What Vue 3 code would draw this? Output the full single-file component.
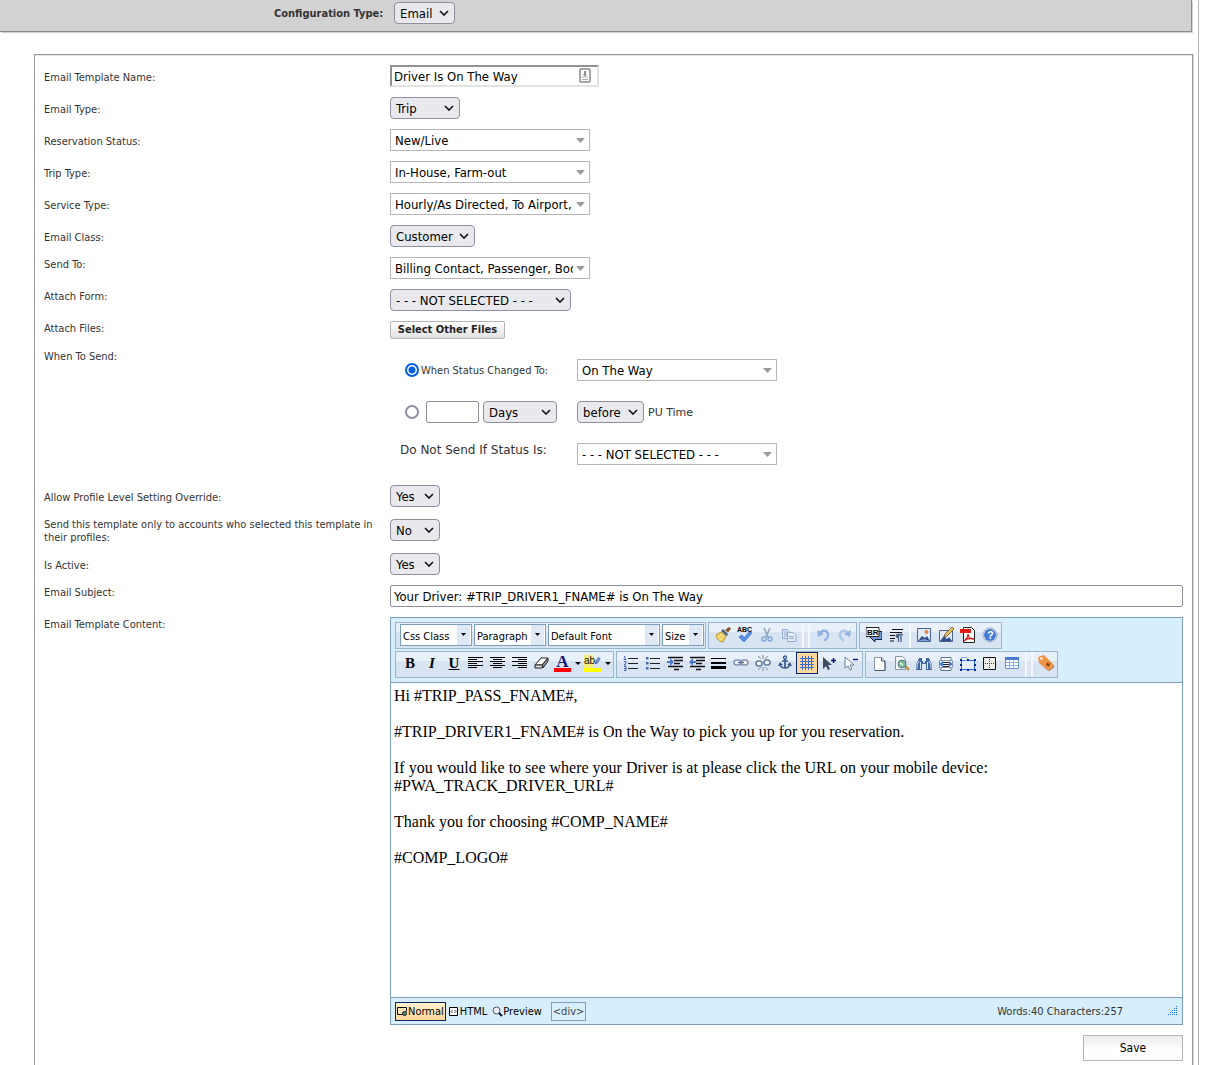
<script setup>
import { ref } from 'vue'

const configType = ref('Email')
const sendMode = ref('status')

const topRows = [
  { id: 'etype', label: 'Email Type:', value: 'Trip', kind: 'native', size: 'w70' },
  { id: 'resstatus', label: 'Reservation Status:', value: 'New/Live', kind: 'flat', size: 'w200' },
  { id: 'triptype', label: 'Trip Type:', value: 'In-House, Farm-out', kind: 'flat', size: 'w200' },
  { id: 'svctype', label: 'Service Type:', value: 'Hourly/As Directed, To Airport, From Airport', kind: 'flat', size: 'w200' },
  { id: 'eclass', label: 'Email Class:', value: 'Customer', kind: 'native', size: 'w85' },
  { id: 'sendto', label: 'Send To:', value: 'Billing Contact, Passenger, Booking Contact', kind: 'flat', size: 'w200', top: true },
  { id: 'form', label: 'Attach Form:', value: '- - - NOT SELECTED - - -', kind: 'native', size: 'w181', top: true },
]

const flagRows = [
  { id: 'override', label: 'Allow Profile Level Setting Override:', value: 'Yes' },
  { id: 'only', label: 'Send this template only to accounts who selected this template in their profiles:', value: 'No' },
  { id: 'active', label: 'Is Active:', value: 'Yes' },
]

const combos = [
  { label: 'Css Class', size: 'c72' },
  { label: 'Paragraph', size: 'c72' },
  { label: 'Default Font', size: 'c112' },
  { label: 'Size', size: 'c42' },
]

const art = {
  brush: '<path d="M1 8l5-3 5 4-3 6c-3 0-7-3-7-7z" fill="#f3cf63" stroke="#b08022" stroke-width=".8"/><path d="M3 9l4 4M5 7l4 4" stroke="#fff3b0"/><path d="M6 4l6 5 1-2-5-5z" fill="#4f5f78"/><path d="M10 3l4-3 2 1.500-3 4z" fill="#8a5526"/>',
  spell: '<text x="0" y="5" font-size="7" font-weight="bold" font-family="Liberation Sans, sans-serif">ABC</text><path d="M2 10l3-2 2 3 5-6 3 1-8 9z" fill="#5a92ea" stroke="#2456b0" stroke-width=".6"/>',
  cut: '<path d="M5 1l4 9M11 1L7 10" stroke="#93a5c0" stroke-width="1.600" fill="none"/><circle cx="5" cy="12" r="2" fill="none" stroke="#84a4dc" stroke-width="1.500"/><circle cx="11" cy="12" r="2" fill="none" stroke="#84a4dc" stroke-width="1.500"/>',
  copy: '<path d="M1.500 2.500h5l2 2v7h-7z" fill="#dce6f6" stroke="#94abd2"/><path d="M3 5h4M3 7h4M3 9h4" stroke="#94abd2"/><path d="M6.500 5.500h6l2.500 2.500v6.500H6.500z" fill="#e6eefa" stroke="#94abd2"/><path d="M8 9.500h5M8 11.500h5" stroke="#94abd2"/>',
  undo: '<path d="M4 7c3-5 9-4 9 1 0 3-2 5-4 5" fill="none" stroke="#93b3e4" stroke-width="2.400"/><path d="M2 3l1 7 6-3z" fill="#93b3e4"/>',
  redo: '<path d="M12 7c-3-5-9-4-9 1 0 3 2 5 4 5" fill="none" stroke="#aec8ec" stroke-width="2.400"/><path d="M14 3l-1 7-6-3z" fill="#93b3e4"/>',
  br: '<path d="M5 4.500h11v8H9V15l-5-5z" fill="#7198db" stroke="#101840"/><path d="M0 .5h13v9H0z" fill="#fff" stroke="#222"/><text x="1" y="8" font-size="8" font-weight="bold" font-family="Liberation Sans, sans-serif">BR</text>',
  para: '<path d="M4 2.500h11M2 5.500h12M2 8.500h5M2 11.500h5M2 14h4" stroke="#111" stroke-width="1.200"/><path d="M10.500 7v8M13 7v8M9 7.500h6" stroke="#4e6288" stroke-width="1.300"/><circle cx="9.500" cy="9" r="2" fill="#4e6288"/>',
  image: '<path d="M1.500 1.500h13v13h-13z" fill="#dfeafa" stroke="#4a648e"/><path d="M2 14l4-5 3 2 2-2 3 5z" fill="#334f86"/><path d="M2 14l6-2 6 2z" fill="#7aa2dc"/><circle cx="10.500" cy="5" r="2" fill="#ee8147"/>',
  edit: '<path d="M1.500 3.500h13v11h-13z" fill="#dfeafa" stroke="#4a648e"/><path d="M2 14l4-5 3 3 2-2 3 4z" fill="#334f86"/><path d="M6 10l1-3 7-7 2 2-7 7z" fill="#edc35b" stroke="#5e4924" stroke-width=".8"/>',
  pdf: '<path d="M3.500.5h8l3 3v12h-11z" fill="#fff" stroke="#222"/><path d="M0 2h11v4H0z" fill="#e11b14"/><path d="M4 14c4-3 4-6 4-7 0 4 3 5 6 5-4-1-8 0-10 2" fill="none" stroke="#d6201c" stroke-width="1.300"/>',
  help: '<circle cx="8" cy="8" r="7" fill="#fff" stroke="#8191ae" stroke-width=".8"/><circle cx="8" cy="8" r="6" fill="#4079d6"/><text x="5" y="12" fill="#fff" font-size="11" font-weight="bold" font-family="Liberation Sans, sans-serif">?</text>',
  left: '<path d="M0 2.500h15M0 4.500h9M0 6.500h15M0 8.500h9M0 10.500h15M0 12.500h9" stroke="#000"/>',
  center: '<path d="M0 2.500h15M3 4.500h9M0 6.500h15M3 8.500h9M0 10.500h15M3 12.500h9" stroke="#000"/>',
  right: '<path d="M0 2.500h15M6 4.500h9M0 6.500h15M6 8.500h9M0 10.500h15M6 12.500h9" stroke="#000"/>',
  eraser: '<path d="M1 10l6-7h7l-6 7z" fill="#fff" stroke="#222"/><path d="M8 10l6-7v3l-5 7z" fill="#999" stroke="#222"/><path d="M1 10v3h7l1-3z" fill="#ddd" stroke="#222"/>',
  ol: '<path d="M5 3.500h10M5 8.500h10M5 13.500h10" stroke="#222"/><path d="M1 1.500h1v3M.5 4.500h3M1 6.500h2v1.500l-2 2h2M1 11.500h2v4H1M1 13.500h2" fill="none" stroke="#4466b4"/>',
  ul: '<path d="M5 3.500h10M5 8.500h10M5 13.500h10" stroke="#222"/><path d="M1 2h2.500v2.500H1zM1 7h2.500v2.500H1zM1 12h2.500v2.500H1z" fill="#4466b4"/>',
  outdent: '<path d="M1 2.500h15M7 5.500h9M7 8.500h6M1 11.500h15M7 14.500h5" stroke="#111" stroke-width="1.400"/><path d="M0 6h3V3l4 4-4 4V8H0z" fill="#4a78d0"/>',
  indent: '<path d="M1 2.500h15M7 5.500h9M7 8.500h6M1 11.500h15M7 14.500h5" stroke="#111" stroke-width="1.400"/><path d="M7 6H4V3L0 7l4 4V8h3z" fill="#4a78d0"/>',
  rule: '<path d="M0 3.500h15" stroke="#000"/><path d="M0 8h15" stroke="#000" stroke-width="2"/><path d="M0 12.500h15" stroke="#000" stroke-width="3"/>',
  link: '<rect x="1" y="5" width="7" height="5" rx="2.500" fill="#f5f8fc" stroke="#8093b0" stroke-width="1.500"/><rect x="8" y="5" width="7" height="5" rx="2.500" fill="#f5f8fc" stroke="#8093b0" stroke-width="1.500"/><path d="M5 7.500h6" stroke="#56698a" stroke-width="1.500"/>',
  unlink: '<rect x="1" y="6" width="6" height="5" rx="2.500" fill="#f5f8fc" stroke="#667c9e" stroke-width="1.500"/><rect x="9" y="5" width="6" height="5" rx="2.500" fill="#f5f8fc" stroke="#667c9e" stroke-width="1.500"/><path d="M3 1l3 3M8 0v4M13 1l-3 3M3 15l3-3M8 16v-4M13 15l-3-3" stroke="#7f8897"/>',
  anchor: '<circle cx="8" cy="2.500" r="1.500" fill="none" stroke="#38598e" stroke-width="1.300"/><path d="M8 4v9M5 6h6M3 9c0 3 3 4 5 4s5-1 5-4" fill="none" stroke="#38598e" stroke-width="1.700"/><path d="M1 11l2-4 3 3zM15 11l-2-4-3 3z" fill="#38598e"/>',
  grid: '<path d="M1 3.500h14M1 6.500h14M1 9.500h14M1 12.500h14M3.500 1v14M6.500 1v14M9.500 1v14M12.500 1v14" stroke="#3d6acb"/>',
  pick: '<path d="M2 2v12l3-3 2 4 2-1-2-4h4z" fill="#3d4c63"/><path d="M12.500 3v5M10 5.500h5" stroke="#11117a" stroke-width="1.400"/>',
  unpick: '<path d="M2 2v11l3-2 2 4 2-1-2-4h4z" fill="#fff" stroke="#6b809b"/><path d="M10 4.500h5" stroke="#11117a" stroke-width="1.400"/>',
  page: '<path d="M2.500 2.500h7l3.500 3.500v9.500H2.500z" fill="#fff" stroke="#8796ad"/><path d="M9.500 2.500V6H13M13 6v9.500H3" fill="none" stroke="#42536e"/>',
  find: '<path d="M1.500 1.500h7l3 3v10h-10z" fill="#fff" stroke="#8796ad"/><path d="M11 11l4 4" stroke="#bd974a" stroke-width="2.500"/><circle cx="8" cy="9" r="4" fill="#78b89a" stroke="#587a91"/><path d="M6 8l3 2" stroke="#d7f2d1" stroke-width="2"/>',
  bino: '<path d="M3 3h3v3h4V3h3l3 7v5h-6V9H6v6H0v-5z" fill="#40669f"/><path d="M3 6l-2 4v4M4.500 7v7M13 6l2 4v4M11.500 7v7" stroke="#d6e6f9" fill="none"/><path d="M7 6h2v2H7z" fill="#b8d1ee"/>',
  width: '<path d="M3 2.500h10v3H3zM3 12.500h10v3H3z" fill="#fff" stroke="#627390"/><path d="M1.500 5.500h13v7h-13z" fill="#eff5fd" stroke="#8796ad"/><path d="M5 7.500h6M5 9.500h6M5 11.500h6" stroke="#223"/><path d="M1 9l4-3v6zM15 9l-4-3v6z" fill="#4b7ad1"/>',
  layer: '<path d="M1.500 5.500h13v9h-13z" fill="#e4effc" stroke="#2b68d9"/><path d="M1.500 5V2.500h5l2 3" fill="#fff" stroke="#6ea8e8"/><path d="M0 4h2v2H0zM7 4h2v2H7zM14 4h2v2h-2zM0 9h2v2H0zM14 9h2v2h-2zM0 14h2v2H0zM7 14h2v2H7zM14 14h2v2h-2z" fill="#0b24a0"/>',
  box: '<path d="M1.500 2.500h12v12h-12z" fill="#f0f0eb" stroke="#111"/><path d="M7.500 4v9M3 8.500h9" stroke="#333" stroke-dasharray="1 1"/>',
  table: '<path d="M1.500 2.500h13v11h-13z" fill="#fff" stroke="#6b93c8"/><path d="M1 2h14v3H1z" fill="#467bd0"/><path d="M2 7.500h12M2 10.500h12M5.500 5v8M9.500 5v8" stroke="#8fb0de"/>',
  tag: '<path d="M0 2l6-2 10 10-5 6L1 8z" fill="#ee9444"/><path d="M1 8l10 8 5-6v2l-5 4.500z" fill="#b0672a"/><circle cx="3.500" cy="3.500" r="1.300" fill="#fff"/><path d="M10 7l-1 4M12 8l-2 4M8 9l4 1" stroke="#583414" stroke-width=".8"/>',
}

const groupsTop = [
  ['brush:Format painter', 'spell:Spelling', 'cut:Cut', 'copy:Copy', '||', 'undo:Undo', 'redo:Redo'],
  ['br:Line break', 'para:Paragraph break', '|', 'image:Insert image', 'edit:Edit image', 'pdf:Export PDF', 'help:Help'],
]
const aligns = ['left:Align left', 'center:Align center', 'right:Align right', 'eraser:Remove format']
const groupsBottom = [
  ['ol:Numbered list', 'ul:Bulleted list', 'outdent:Indent', 'indent:Outdent', 'rule:Horizontal rule', 'link:Link', 'unlink:Unlink', 'anchor:Anchor', 'grid:Toggle borders', 'pick:Select all', 'unpick:Select none'],
  ['page:New page', 'find:Print preview', 'bino:Find', 'width:Fit width', 'layer:Insert layer', 'box:Insert box', 'table:Insert table', '||', 'tag:Insert tag'],
]
const key = (s) => s.split(':')[0]
const title = (s) => s.split(':')[1]

const paragraphs = [
  ['Hi #TRIP_PASS_FNAME#,'],
  ['#TRIP_DRIVER1_FNAME# is On the Way to pick you up for you reservation.'],
  ['If you would like to see where your Driver is at please click the URL on your mobile device:', '#PWA_TRACK_DRIVER_URL#'],
  ['Thank you for choosing #COMP_NAME#'],
  ['#COMP_LOGO#'],
]
</script>

<template>
  <div class="page">
    <header class="bar">
      <label class="bar-label" for="config">Configuration Type:</label>
      <select id="config" v-model="configType" class="native w61">
        <option>Email</option>
      </select>
    </header>

    <main class="panel">
      <div class="row">
        <label for="tname">Email Template Name:</label>
        <div class="field name-field">
          <input id="tname" type="text" class="inset" value="Driver Is On The Way">
          <svg class="name-icon" width="12" height="15" viewBox="0 0 12 15" aria-hidden="true">
            <rect x="1" y="1" width="10" height="13" rx="1" fill="#fff" stroke="#888" stroke-width="1.500" />
            <path d="M6 3v5" stroke="#888" stroke-width="2" />
            <path d="M4 6.500h4M3 9h6M3 11.500h6" stroke="#aaa" />
          </svg>
        </div>
      </div>

      <div v-for="r in topRows" :key="r.id" class="row" :class="{ top: r.top }">
        <label :for="r.id">{{ r.label }}</label>
        <div class="field">
          <select :id="r.id" :class="[r.kind, r.size]">
            <option>{{ r.value }}</option>
          </select>
        </div>
      </div>

      <div class="row top">
        <label for="files">Attach Files:</label>
        <div class="field">
          <button id="files" type="button" class="files-btn">Select Other Files</button>
        </div>
      </div>

      <div class="row top">
        <span class="label">When To Send:</span>
        <div class="when">
          <div class="when-left">
            <input id="m1" v-model="sendMode" type="radio" value="status">
            <label for="m1">When Status Changed To:</label>
          </div>
          <select class="flat w200" aria-label="Status"><option>On The Way</option></select>

          <div class="when-left">
            <input v-model="sendMode" type="radio" value="time" aria-label="Relative to pick-up time">
            <input type="text" class="plain count" aria-label="Amount">
            <select class="native w74" aria-label="Unit"><option>Days</option></select>
          </div>
          <div class="when-right">
            <select id="rel" class="native w67"><option>before</option></select>
            <label for="rel" class="wide">PU Time</label>
          </div>

          <label for="skip" class="wide skip">Do Not Send If Status Is:</label>
          <select id="skip" class="flat w200"><option>- - - NOT SELECTED - - -</option></select>
        </div>
      </div>

      <div v-for="r in flagRows" :key="r.id" class="row">
        <label :for="r.id">{{ r.label }}</label>
        <div class="field">
          <select :id="r.id" class="native w50"><option>{{ r.value }}</option></select>
        </div>
      </div>

      <div class="row top">
        <label for="subject">Email Subject:</label>
        <input id="subject" type="text" class="plain" value="Your Driver: #TRIP_DRIVER1_FNAME# is On The Way">
      </div>

      <div class="row top">
        <span class="label">Email Template Content:</span>
        <section class="editor">
          <div class="toolbar">
            <div class="tools">
              <div class="group">
                <div class="combos">
                  <select v-for="c in combos" :key="c.label" class="combo" :class="c.size" :aria-label="c.label">
                    <option>{{ c.label }}</option>
                  </select>
                </div>
              </div>
              <div v-for="(g, i) in groupsTop" :key="i" class="group icons-top">
                <template v-for="t in g" :key="t">
                  <span v-if="t[0] === '|'" class="sep" :class="{ double: t === '||' }"></span>
                  <button v-else type="button" class="tool" :aria-label="title(t)">
                    <svg width="16" height="16" viewBox="0 0 16 16" v-html="art[key(t)]"></svg>
                  </button>
                </template>
              </div>
            </div>
            <div class="tools">
              <div class="group">
                <button type="button" class="tool glyph" aria-label="Bold"><b>B</b></button>
                <button type="button" class="tool glyph" aria-label="Italic"><i>I</i></button>
                <button type="button" class="tool glyph" aria-label="Underline"><u>U</u></button>
                <button v-for="t in aligns" :key="t" type="button" class="tool" :aria-label="title(t)">
                  <svg width="16" height="16" viewBox="0 0 16 16" v-html="art[key(t)]"></svg>
                </button>
                <button type="button" class="tool color" aria-label="Text color">
                  <span class="ink">A</span>
                </button>
                <button type="button" class="tool color" aria-label="Highlight color">
                  <span class="mark">ab<svg width="8" height="12" viewBox="0 0 8 12"><path d="M0 10l1-4 4-5 2 2-4 6z" fill="#7da0d8" stroke="#34507f" /></svg></span>
                </button>
              </div>
              <div v-for="(g, i) in groupsBottom" :key="i" class="group">
                <template v-for="t in g" :key="t">
                  <span v-if="t[0] === '|'" class="sep" :class="{ double: t === '||' }"></span>
                  <button v-else type="button" class="tool" :class="{ on: key(t) === 'grid' }" :aria-label="title(t)">
                    <svg width="16" height="16" viewBox="0 0 16 16" v-html="art[key(t)]"></svg>
                  </button>
                </template>
              </div>
            </div>
          </div>

          <div class="content" contenteditable="true" role="textbox" aria-label="Email Template Content">
            <p v-for="(p, i) in paragraphs" :key="i">
              <template v-for="(line, j) in p" :key="j"><br v-if="j">{{ line }}</template>
            </p>
          </div>

          <footer class="status">
            <button type="button" class="mode active">
              <svg width="11" height="11" viewBox="0 0 11 11"><path d="M.5 1.500h9v4M.5 1.500v7h5" fill="none" stroke="#000" /><circle cx="7.500" cy="7.500" r="2" fill="#4a9a6a" stroke="#113" /></svg>Normal
            </button>
            <button type="button" class="mode">
              <svg width="11" height="9" viewBox="0 0 11 9"><path d="M.5.5h8v8h-8z" fill="#fff" stroke="#000" /><path d="M3.500 3L2 4.500 3.500 6M5.500 3L7 4.500 5.500 6" fill="none" stroke="#000" stroke-width=".8" /></svg>HTML
            </button>
            <button type="button" class="mode">
              <svg width="11" height="11" viewBox="0 0 11 11"><circle cx="4.500" cy="4.500" r="3.500" fill="#eef" stroke="#555" /><path d="M7 7l3 3" stroke="#113" stroke-width="2" /></svg>Preview
            </button>
            <button type="button" class="node">&lt;div&gt;</button>
            <span class="counts">Words:40 Characters:257</span>
            <svg class="grip" width="10" height="10" viewBox="0 0 10 10" aria-hidden="true">
              <path d="M8.500 0v10M6.500 2v8M4.500 4v6M2.500 6v4M.5 8v2" stroke="#1478d8" stroke-dasharray="1 1" />
            </svg>
          </footer>
        </section>
      </div>

      <button type="button" class="save">Save</button>
    </main>
  </div>
</template>

<style>
body {
  margin: 0;
  background: #fff;
}
</style>

<style scoped>
* {
  box-sizing: border-box;
}

.page {
  display: flex;
  flex-direction: column;
  min-height: 100vh;
  margin-right: 21px;
  padding-right: 5px;
  border-right: 1px solid #b4b4b4;
  font: 11px/13px "DejaVu Sans Condensed", Tahoma, sans-serif;
  color: #333;
}

.bar {
  display: flex;
  align-items: flex-start;
  height: 32px;
  margin-right: 1px;
  padding: 2px 0 0 274px;
  background: #d2d2d2;
  border: solid #8c8c8c;
  border-width: 0 1px 1px 0;
  box-shadow: 1px 1px #d0d0d0;
}

.bar-label {
  width: 120px;
  line-height: 24px;
  font-weight: bold;
}

.panel {
  display: flex;
  flex: 1;
  flex-direction: column;
  gap: 10px;
  margin: 22px 0 0 34px;
  padding: 10px 9px 0;
  border: solid #999;
  border-width: 1px 1px 0;
  box-shadow: 1px 0 #d8d8d8, inset 0 1px #e4e4e4;
}

.row {
  display: grid;
  grid-template-columns: 346px minmax(0, 1fr);
  align-items: center;
}

.row.top {
  align-items: start;
}

.row > label,
.label {
  margin-bottom: -1px;
  padding: 1px 8px 0 0;
}

.field {
  display: flex;
}

select,
input,
button {
  margin: 0;
  font: inherit;
}

select,
input[type="text"] {
  height: 22px;
  font-size: 13px;
  line-height: 17px;
  color: #000;
  border-radius: 2px;
}

select {
  appearance: none;
  background-repeat: no-repeat;
}

.native {
  padding: 1px 18px 0 5px;
  border: 1px solid #8f8f9d;
  border-radius: 4px;
  background-color: #e9e9ed;
  background-image: url("data:image/svg+xml,%3Csvg xmlns='http://www.w3.org/2000/svg' width='10' height='6'%3E%3Cpath d='M1 1l4 4 4-4' fill='none' stroke='%23111' stroke-width='1.600'/%3E%3C/svg%3E");
  background-position: right 5px center;
}

.flat {
  padding: 1px 16px 0 4px;
  border: 1px solid #b6b6b6;
  border-radius: 0;
  background-color: #fff;
  background-image: url("data:image/svg+xml,%3Csvg xmlns='http://www.w3.org/2000/svg' width='9' height='5'%3E%3Cpath d='M0 0h9L4.500 5z' fill='%23999'/%3E%3C/svg%3E");
  background-position: right 4px center;
}

.w50 { width: 50px; }
.w61 { width: 61px; }
.w67 { width: 67px; }
.w70 { width: 70px; }
.w74 { width: 74px; }
.w85 { width: 85px; }
.w181 { width: 181px; }
.w200 { width: 200px; }

.name-field {
  position: relative;
  width: 209px;
}

.inset {
  width: 100%;
  padding: 0 24px 0 2px;
  border: 2px solid;
  border-color: #929292 #e3e3e3 #e3e3e3 #929292;
}

input.inset {
  border-radius: 0;
}

.name-icon {
  position: absolute;
  top: 3px;
  right: 8px;
}

.plain {
  padding: 0 3px;
  border: 1px solid #8f8f9d;
}

.files-btn {
  width: 115px;
  height: 18px;
  padding: 0;
  border: 1px solid #b5b5b5;
  border-radius: 2px;
  background: linear-gradient(#fff, #e2e2e2);
  font-weight: bold;
  line-height: 16px;
  color: #222;
}

.when {
  display: grid;
  grid-template-columns: 187px 1fr;
  row-gap: 20px;
  padding: 10px 0;
}

.when-left,
.when-right {
  display: flex;
  align-items: center;
  gap: 4px;
}

.when-left {
  padding-left: 15px;
}

input[type="radio"] {
  appearance: none;
  width: 14px;
  height: 14px;
  border: 2px solid #8f8f9d;
  border-radius: 50%;
  background: #fff;
}

input[type="radio"]:checked {
  border-color: #0060df;
  background: radial-gradient(circle, #0060df 3px, #fff 4px);
}

.when-left label {
  margin-left: -2px;
}

.count {
  width: 53px;
  margin-left: 3px;
}

.wide {
  font-family: "DejaVu Sans", Verdana, sans-serif;
}

.skip {
  padding-left: 10px;
  font-size: 12px;
  line-height: 15px;
}

.editor {
  border: 1px solid #7b9ebd;
  background: #d7effc;
}

.toolbar {
  display: flex;
  flex-direction: column;
  gap: 2px;
  padding: 4px;
  border-bottom: 1px solid #7b9ebd;
}

.tools {
  display: flex;
  flex-wrap: wrap;
  gap: 2px;
}

.group {
  display: flex;
  align-items: flex-start;
  height: 27px;
  padding-left: 3px;
  border: 1px solid #9db5ca;
  background: linear-gradient(#e8f0fa 0 35%, #d9e4f3 35% 100%);
}

.combos {
  display: flex;
  gap: 2px;
  padding: 1px 1px 0;
}

.icons-top .tool {
  height: 24px;
}

.combo {
  padding: 2px 12px 0 2px;
  border: 1px solid #7b9ebd;
  background-color: #fff;
  background-image: url("data:image/svg+xml,%3Csvg xmlns='http://www.w3.org/2000/svg' width='13' height='20'%3E%3Cpath d='M0 0h13v20H0z' fill='%23dfe9f6'/%3E%3Cpath d='M4 8h5l-2.500 3z'/%3E%3C/svg%3E");
  background-position: right 1px center;
}

select.combo {
  border-radius: 0;
  font-size: 11px;
}

.c42 { width: 42px; }
.c72 { width: 72px; }
.c112 { width: 112px; }

.tool {
  display: flex;
  align-items: center;
  justify-content: center;
  width: 22px;
  height: 22px;
  padding: 0;
  border: 1px solid transparent;
  background: none;
  color: #000;
}

.tool.on {
  border-color: #0a246a;
  background: #ffd9a0;
}

.glyph {
  font: bold 15px/18px "Liberation Serif", serif;
}

.tool.color {
  justify-content: flex-start;
  width: 30px;
}

.color::after {
  content: "";
  margin-left: 4px;
  border: solid transparent;
  border-width: 3px 3px 0;
  border-top-color: #000;
}

.ink,
.mark {
  width: 17px;
  height: 17px;
  border-bottom: 4px solid #f00;
  font: bold 17px/14px "Liberation Serif", serif;
  color: #14147a;
}

.mark {
  display: flex;
  border-bottom-color: #ff0;
  background: linear-gradient(90deg, #f1ef80 60%, transparent 60%);
  font: 10px/11px "Liberation Sans", sans-serif;
  color: #111;
}

.sep {
  width: 6px;
  height: 25px;
  background: linear-gradient(90deg, transparent 2px, #f4f8fd 2px 4px, transparent 4px);
}

.sep.double {
  width: 12px;
  background: linear-gradient(90deg, transparent 2px, #f4f8fd 2px 4px, transparent 4px 8px, #f4f8fd 8px 10px, transparent 10px);
}

.content {
  min-height: 314px;
  padding: 4px 3px;
  background: #fff;
  font: 16px/18px "Liberation Serif", "Times New Roman", serif;
  color: #000;
}

.content p {
  margin: 0 0 18px;
}

.status {
  display: flex;
  align-items: center;
  gap: 1px;
  height: 27px;
  padding: 0 4px;
  border-top: 1px solid #7b9ebd;
}

.mode {
  display: flex;
  align-items: center;
  height: 19px;
  padding: 0 1px;
  border: 1px solid transparent;
  background: none;
  color: #000;
}

.mode.active {
  border-color: #0a246a;
  background: linear-gradient(#fff0cf, #ffd79a);
}

.node {
  height: 19px;
  margin-left: 6px;
  padding: 0 1px;
  border: 1px solid #7b9ebd;
  background: none;
  color: #444;
}

.counts {
  margin-left: auto;
  margin-right: 44px;
}

.save {
  align-self: flex-end;
  width: 100px;
  height: 26px;
  border: 1px solid #b6b6b6;
  background: linear-gradient(#ececec, #fff 60%);
  font-size: 12px;
  color: #000;
}
</style>
